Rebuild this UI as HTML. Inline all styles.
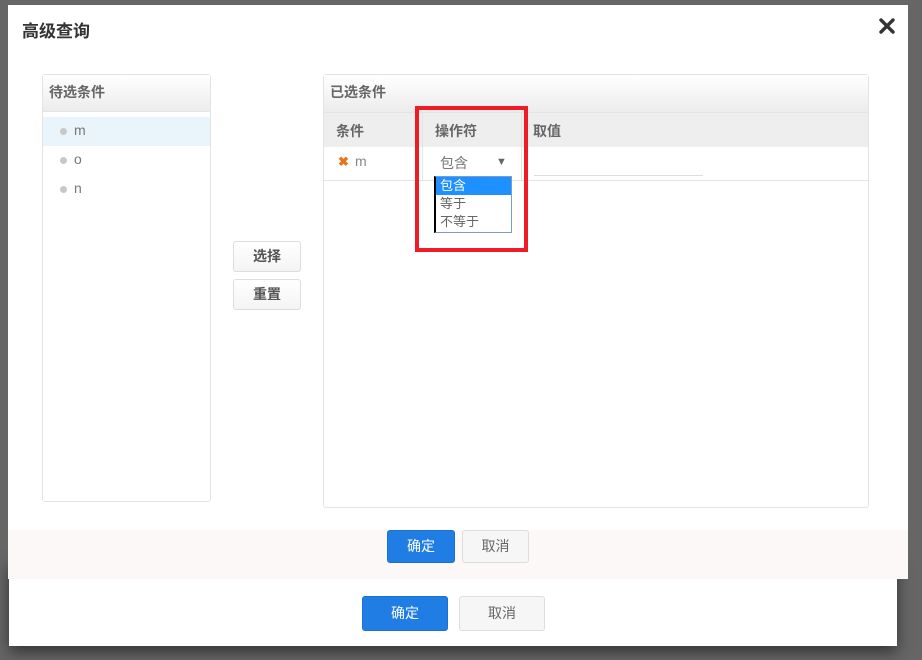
<!DOCTYPE html>
<html><head><meta charset="utf-8"><style>
*{box-sizing:border-box;margin:0;padding:0}
body{width:922px;height:660px;background:#666;position:relative;overflow:hidden;font-family:"Liberation Sans","Noto Sans CJK SC",sans-serif;font-size:14px;color:#555}
.abs{position:absolute}
.btn{position:absolute;border-radius:3px;text-align:center;font-size:14px}
.blue{background:#1f7de3;color:#fff;border:1px solid #1a72d0}
.gray{background:#f6f6f6;color:#666;border:1px solid #ddd}
.g{background:linear-gradient(#fff,#f4f4f4);border:1px solid #ddd;color:#555;font-weight:bold}
.panel{position:absolute;background:#fff;border:1px solid #e3e3e3;border-radius:3px}
.ph{position:absolute;left:0;right:0;top:0;height:37px;background:linear-gradient(#fff,#ececec);border-bottom:1px solid #e3e3e3;font-weight:bold;color:#666;padding:7px 6px;font-size:14px}
.dot{display:inline-block;width:7px;height:7px;border-radius:50%;background:#c8c8c8;margin-right:7px}
</style></head><body>
<div class="abs" style="left:9px;top:560px;width:888px;height:86px;background:#fff;box-shadow:0 6px 14px rgba(0,0,0,.5)"></div>
<div class="btn blue" style="left:362px;top:596px;width:86px;height:35px;line-height:33px">确定</div>
<div class="btn gray" style="left:459px;top:596px;width:86px;height:35px;line-height:33px">取消</div>

<div class="abs" style="left:8px;top:5px;width:900px;height:574px;background:#fff"></div>
<div class="abs" style="left:22px;top:17px;font-size:17px;font-weight:bold;color:#333">高级查询</div>
<svg class="abs" style="left:879px;top:18px" width="16" height="16" viewBox="0 0 16 16"><path d="M2 2L14 14M14 2L2 14" stroke="#333" stroke-width="3.4" stroke-linecap="round"/></svg>

<div class="panel" style="left:42px;top:74px;width:169px;height:428px">
 <div class="ph">待选条件</div>
 <div class="abs" style="left:0;right:0;top:42px;height:29px;background:#eaf4fb"></div>
 <div class="abs" style="left:17px;top:47px;color:#777"><span class="dot"></span>m</div>
 <div class="abs" style="left:17px;top:76px;color:#777"><span class="dot"></span>o</div>
 <div class="abs" style="left:17px;top:105px;color:#777"><span class="dot"></span>n</div>
</div>

<div class="btn g" style="left:233px;top:241px;width:68px;height:31px;line-height:29px">选择</div>
<div class="btn g" style="left:233px;top:279px;width:68px;height:31px;line-height:29px">重置</div>

<div class="panel" style="left:323px;top:74px;width:546px;height:434px">
 <div class="ph" style="height:38px">已选条件</div>
 <div class="abs" style="left:0;right:0;top:38px;height:34px;background:#eee"></div>
 <div class="abs" style="left:12px;top:46px;font-weight:bold;color:#666">条件</div>
 <div class="abs" style="left:111px;top:46px;font-weight:bold;color:#666">操作符</div>
 <div class="abs" style="left:209px;top:46px;font-weight:bold;color:#666">取值</div>
 <div class="abs" style="left:98px;top:38px;width:1px;height:68px;background:#e3e3e3"></div>
 <div class="abs" style="left:197px;top:38px;width:1px;height:68px;background:#e3e3e3"></div>
 <div class="abs" style="left:0;right:0;top:105px;height:1px;background:#e3e3e3"></div>
 <div class="abs" style="left:14px;top:79px;color:#e8731f;font-weight:bold;font-size:13px">✖</div>
 <div class="abs" style="left:31px;top:78px;color:#888">m</div>
 <div class="abs" style="left:116px;top:78px;color:#777">包含</div>
 <div class="abs" style="left:172px;top:81px;color:#666;font-size:11px">▼</div>
 <div class="abs" style="left:210px;top:100px;width:169px;height:1px;background:#ddd"></div>
</div>

<div class="abs" style="left:434px;top:176px;width:78px;height:57px;background:#fff;border:1px solid #7a9cd3;border-left:2px solid #000;font-size:13px;line-height:18px;color:#666">
 <div style="background:#1e90ff;color:#fff;padding-left:4px">包含</div>
 <div style="padding-left:4px">等于</div>
 <div style="padding-left:4px">不等于</div>
</div>
<div class="abs" style="left:415px;top:106px;width:113px;height:146px;border:4px solid #ee1c25"></div>

<div class="abs" style="left:8px;top:530px;width:900px;height:49px;background:#fbf8f7"></div>
<div class="btn blue" style="left:387px;top:530px;width:68px;height:33px;line-height:31px">确定</div>
<div class="btn gray" style="left:462px;top:530px;width:67px;height:33px;line-height:31px">取消</div>
</body></html>
